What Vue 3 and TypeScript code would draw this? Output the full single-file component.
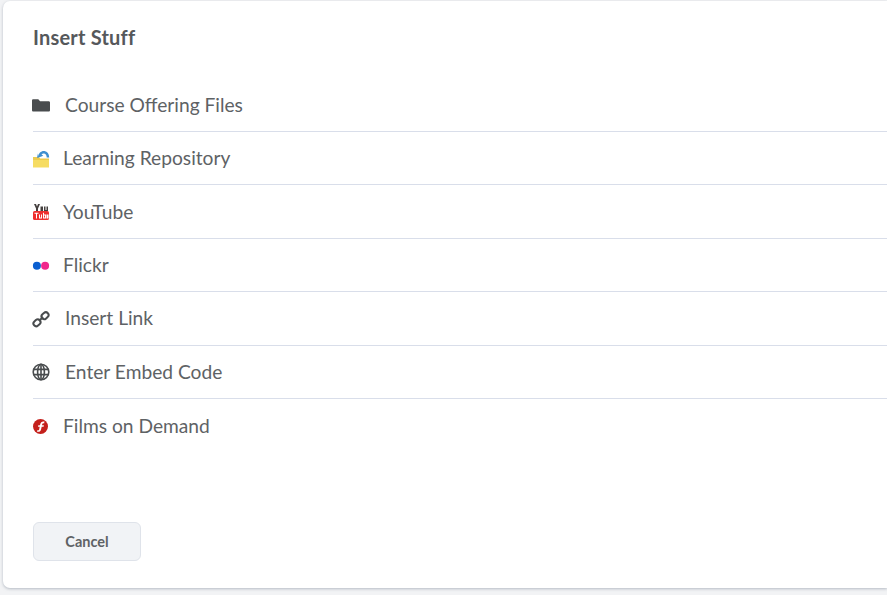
<script setup lang="ts">
type Item = { label: string; icon: string; gap: string }
const items: Item[] = [
  { label: 'Course Offering Files', icon: 'folder', gap: 'wide' },
  { label: 'Learning Repository', icon: 'repo', gap: 'narrow' },
  { label: 'YouTube', icon: 'youtube', gap: 'narrow' },
  { label: 'Flickr', icon: 'flickr', gap: 'narrow' },
  { label: 'Insert Link', icon: 'link', gap: 'wide' },
  { label: 'Enter Embed Code', icon: 'globe', gap: 'wide' },
  { label: 'Films on Demand', icon: 'films', gap: 'narrow' },
]
</script>

<template>
  <div class="page">
    <section class="dialog">
      <h1 class="title">Insert Stuff</h1>
      <ul class="list">
        <li v-for="item in items" :key="item.label" class="row" :class="item.gap">
          <svg class="icon" viewBox="0 0 18 18" aria-hidden="true">
            <template v-if="item.icon === 'folder'">
              <path d="M0 4.500C0 3.700.6 3.200 1.300 3.200h5l1.800 2h8.600c.7 0 1.300.6 1.300 1.300v7.700c0 .7-.6 1.300-1.300 1.300H1.300C.6 15.500 0 14.900 0 14.200z" fill="#494c4e" />
            </template>
            <template v-else-if="item.icon === 'repo'">
              <path d="M1 7h6l1.200 1.500H17V17H1z" fill="#eccb4e" />
              <path d="M1 10h16v7.500H1z" fill="#f6dc62" />
              <path d="M6 6.500C6.500 3 9.500.5 12.500 1c2.800.4 4.700 2.600 4.700 6.500h-2.500c0-2.300-1-3.700-2.500-4-1.100-.2-2 .2-2.700 1l1.800 1.300L5.200 8l.2-4.800z" fill="#3f8fd0" />
            </template>
            <template v-else-if="item.icon === 'youtube'">
              <rect x="1" y="8" width="16" height="9" rx="1.600" fill="#ee2e2e" />
              <path d="M2 1h2l1 2.500L6 1h2L6 5.500V8H4V5.500zM8.500 3.500h2.500V8H8.500zM12 3.500h1.500V7h1V3.500H16V8h-4z" fill="#45403f" />
              <path d="M2.500 9.800h4v1H5V15.500H4v-4.700H2.500zM7 11.500h1v3h1v-3h1v4H7zM11 9.800h1v1.700h2v4h-3zM12 12.500v2h1v-2zM14.500 11.500h2v4h-2z" fill="#fff" />
            </template>
            <template v-else-if="item.icon === 'flickr'">
              <circle cx="4.900" cy="9.700" r="4" fill="#0a5fd0" />
              <circle cx="13.100" cy="9.700" r="4" fill="#f0288c" />
            </template>
            <template v-else-if="item.icon === 'link'">
              <g fill="none" stroke="#494c4e" stroke-width="2">
                <rect x="1.200" y="10" width="7.500" height="5.500" rx="2.750" transform="rotate(-42 5 12.750)" />
                <rect x="9.300" y="3" width="7.500" height="5.500" rx="2.750" transform="rotate(-42 13 5.750)" />
                <path d="M7 11l4-4" />
              </g>
            </template>
            <template v-else-if="item.icon === 'globe'">
              <g fill="none" stroke="#494c4e" stroke-width="1.600">
                <circle cx="9" cy="9" r="7.800" />
                <ellipse cx="9" cy="9" rx="3.400" ry="7.800" />
                <path d="M1.400 6.400h15.200M1.400 11.600h15.200M9 1.400v15.200" />
              </g>
            </template>
            <template v-else>
              <circle cx="8.500" cy="9.500" r="7.500" fill="#c4201c" />
              <path d="M12.500 4.500c-2.600-.5-3.800.6-4.300 2.700L8 8.200H6.300l-.3 1.500h1.700l-.5 2.500c-.2 1-.7 1.300-1.900 1.100l-.3 1.400c2.400.5 3.600-.4 4.100-2.500l.6-2.500h1.900l.3-1.500H10l.2-1c.2-.8.700-1 1.900-.8z" fill="#fff" />
            </template>
          </svg>
          <span class="label">{{ item.label }}</span>
        </li>
      </ul>
      <button class="cancel" type="button">Cancel</button>
    </section>
  </div>
</template>

<style>
html, body { margin: 0; background: #f2f3f5; overflow: hidden; }
</style>

<style scoped>
.page {
  width: 887px;
  height: 595px;
  padding: 1px 0 0 3px;
  box-sizing: border-box;
  font-family: Lato, "Liberation Sans", sans-serif;
  color: #5e6265;
}
.dialog {
  box-sizing: border-box;
  width: 884px;
  height: 587px;
  padding: 0 0 27px 30px;
  background: #fff;
  border-radius: 7px 0 0 7px;
  box-shadow: 0 1px 3px rgba(130, 140, 155, 0.55);
  display: flex;
  flex-direction: column;
}
.title {
  margin: 0;
  padding-top: 25px;
  height: 53px;
  box-sizing: border-box;
  font-size: 20px;
  line-height: 22px;
  letter-spacing: 0.2px;
  font-weight: 700;
  color: #55585b;
}
.list {
  list-style: none;
  margin: 24.600px 0 0;
  padding: 0;
}
.row {
  box-sizing: border-box;
  height: 53.4px;
  display: flex;
  align-items: center;
  border-bottom: 1px solid #d9deea;
}
.row:last-child { border-bottom: 0; }
.icon { width: 18px; height: 18px; flex: none; margin-top: 1px; margin-left: -1px; }
.wide .label { margin-left: 15px; }
.narrow .label { margin-left: 13px; }
.label { font-size: 19.200px; line-height: 22px; }
.cancel {
  margin-top: auto;
  width: 108px;
  height: 39px;
  padding: 0;
  background: #f1f3f6;
  border: 1px solid #dfe3ea;
  border-radius: 6px;
  font: 700 14.500px Lato, "Liberation Sans", sans-serif;
  color: #5e6265;
}
</style>
